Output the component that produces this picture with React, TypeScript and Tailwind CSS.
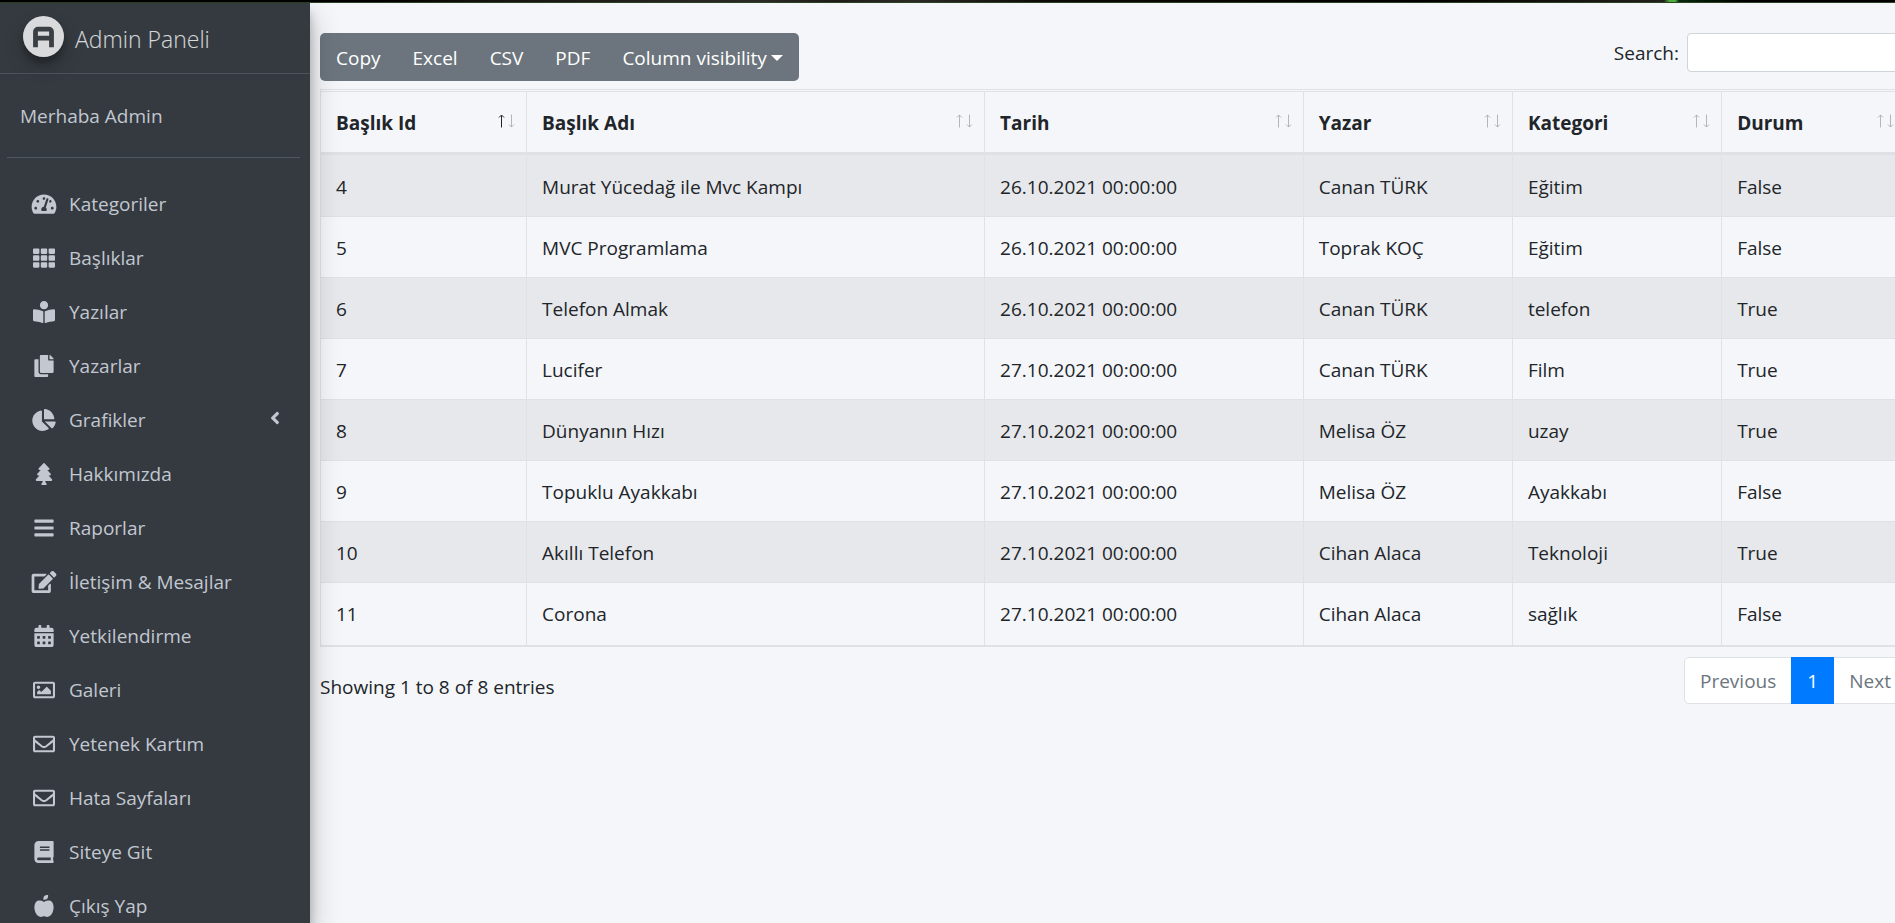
import type { ReactNode } from "react";
import type { IconType } from "react-icons";
import {
  FaAngleLeft,
  FaAppleAlt,
  FaBars,
  FaBook,
  FaBookReader,
  FaCalendarAlt,
  FaChartPie,
  FaCopy,
  FaEdit,
  FaRegEnvelope,
  FaRegImage,
  FaTachometerAlt,
  FaTh,
  FaTree,
} from "react-icons/fa";

type NavEntry = { label: string; icon: IconType; expandable?: boolean };

const navEntries: NavEntry[] = [
  { label: "Kategoriler", icon: FaTachometerAlt },
  { label: "Başlıklar", icon: FaTh },
  { label: "Yazılar", icon: FaBookReader },
  { label: "Yazarlar", icon: FaCopy },
  { label: "Grafikler", icon: FaChartPie, expandable: true },
  { label: "Hakkımızda", icon: FaTree },
  { label: "Raporlar", icon: FaBars },
  { label: "İletişim & Mesajlar", icon: FaEdit },
  { label: "Yetkilendirme", icon: FaCalendarAlt },
  { label: "Galeri", icon: FaRegImage },
  { label: "Yetenek Kartım", icon: FaRegEnvelope },
  { label: "Hata Sayfaları", icon: FaRegEnvelope },
  { label: "Siteye Git", icon: FaBook },
  { label: "Çıkış Yap", icon: FaAppleAlt },
];

const columns = [
  { label: "Başlık Id", width: "w-[13%]" },
  { label: "Başlık Adı", width: "w-[28.9%]" },
  { label: "Tarih", width: "w-[20.1%]" },
  { label: "Yazar", width: "w-[13.2%]" },
  { label: "Kategori", width: "w-[13.2%]" },
  { label: "Durum", width: "w-[11.6%]" },
];

const rows = [
  ["4", "Murat Yücedağ ile Mvc Kampı", "26.10.2021 00:00:00", "Canan TÜRK", "Eğitim", "False"],
  ["5", "MVC Programlama", "26.10.2021 00:00:00", "Toprak KOÇ", "Eğitim", "False"],
  ["6", "Telefon Almak", "26.10.2021 00:00:00", "Canan TÜRK", "telefon", "True"],
  ["7", "Lucifer", "27.10.2021 00:00:00", "Canan TÜRK", "Film", "True"],
  ["8", "Dünyanın Hızı", "27.10.2021 00:00:00", "Melisa ÖZ", "uzay", "True"],
  ["9", "Topuklu Ayakkabı", "27.10.2021 00:00:00", "Melisa ÖZ", "Ayakkabı", "False"],
  ["10", "Akıllı Telefon", "27.10.2021 00:00:00", "Cihan Alaca", "Teknoloji", "True"],
  ["11", "Corona", "27.10.2021 00:00:00", "Cihan Alaca", "sağlık", "False"],
];

function Logo() {
  return (
    <span className="h-[41px] w-[41px] shrink-0 rounded-full shadow-[0_10px_20px_rgba(0,0,0,0.19),0_6px_6px_rgba(0,0,0,0.23)]">
      <svg viewBox="0 0 41 41" className="h-full w-full" aria-hidden="true">
        <circle cx="20.5" cy="20.5" r="20.5" fill="#d9dadb" />
        <path
          d="M12.5 31.3V15.7a2.500 2.500 0 0 1 2.500-2.500h11a2.500 2.500 0 0 1 2.500 2.500v15.600M12.500 22.200h16"
          fill="none"
          stroke="#3a3f44"
          strokeWidth="4.8"
        />
      </svg>
    </span>
  );
}

function SortArrows({ ascending }: { ascending: boolean }) {
  return (
    <svg viewBox="0 0 18 14" className="h-[14px] w-[18px] shrink-0" fill="none" stroke="#212529" aria-hidden="true">
      <path d="M4.500 13.500V1.500M2 3.500L4.500 1L7 3.500" strokeOpacity={ascending ? 1 : 0.3} />
      <path d="M14.500 .5V12.500M12 10.500L14.500 13L17 10.500" strokeOpacity={0.3} />
    </svg>
  );
}

function ToolButton({ children }: { children: ReactNode }) {
  return (
    <button type="button" className="flex h-12 items-center gap-1 px-4 pt-0.5 text-white hover:bg-[#5a6268]">
      {children}
    </button>
  );
}

function Sidebar() {
  return (
    <aside className="z-10 flex w-[310px] shrink-0 flex-col bg-[#343a40] text-[#c2c7d0] shadow-[0_14px_28px_rgba(0,0,0,0.25),0_10px_10px_rgba(0,0,0,0.22)]">
      <a href="#" className="flex h-[71px] shrink-0 items-start gap-[11px] border-b border-[#4b545c] pt-[13px] pl-[23px] text-[23px] font-light text-white/80">
        <Logo />
        <span className="pt-2">Admin Paneli</span>
      </a>
      <div className="mr-[10px] ml-[7px] flex h-[84px] shrink-0 items-center border-b border-[#4f5962] pl-[13px]">
        <a href="#">Merhaba Admin</a>
      </div>
      <nav className="mt-[21px] min-h-0 flex-1 overflow-hidden">
        <ul className="flex flex-col gap-1">
          {navEntries.map(({ label, icon: Icon, expandable }) => (
            <li key={label}>
              <a href="#" className="flex h-[50px] items-center pr-[25px] pl-[30px]">
                <Icon className="h-[22px] w-7 shrink-0" aria-hidden="true" />
                <span className="flex-1 pl-[11px]">{label}</span>
                {expandable && <FaAngleLeft className="mb-1 text-[20px]" aria-hidden="true" />}
              </a>
            </li>
          ))}
        </ul>
      </nav>
    </aside>
  );
}

export default function App() {
  return (
    <div className="flex h-screen flex-col overflow-hidden bg-[#f4f6f9] font-['Open_Sans','Noto_Sans',sans-serif] text-[19px] leading-[30px] text-[#212529]">
      <div className="h-[3px] shrink-0 border-b border-[#2c4020] bg-linear-[90deg,#000_0%,#000_20%,#141412_26%,#2b2b26_40%,#1c1c18_44%,#2b2b26_48%,#0a0a08_55%,#000_75%,#20201c_87.8%,#4caf3c_88.1%,#4caf3c_88.4%,#06280a_88.6%,#000_92%]" />
      <div className="flex min-h-0 flex-1">
        <Sidebar />
        <main className="min-w-0 flex-1 overflow-hidden pt-[30px] pl-[10px]">
          <div className="-mr-3">
            <div className="flex items-start justify-between">
              <div className="flex overflow-hidden rounded-[5px] bg-[#6c757d]">
                <ToolButton>Copy</ToolButton>
                <ToolButton>Excel</ToolButton>
                <ToolButton>CSV</ToolButton>
                <ToolButton>PDF</ToolButton>
                <ToolButton>
                  Column visibility
                  <svg viewBox="0 0 12 6" className="h-[6px] w-3" fill="currentColor" aria-hidden="true">
                    <path d="M0 0H12L6 6Z" />
                  </svg>
                </ToolButton>
              </div>
              <label className="flex items-center gap-2">
                Search:
                <input type="search" className="h-[39px] w-[220px] rounded-[4px] border border-[#ced4da] bg-white px-2" />
              </label>
            </div>
            <table className="mt-2 w-full table-fixed border-separate border-spacing-0 border border-[#dee2e6] pt-px">
              <thead>
                <tr>
                  {columns.map(({ label, width }, index) => (
                    <th
                      key={label}
                      scope="col"
                      aria-sort={index === 0 ? "ascending" : undefined}
                      className={`${width} border-t border-r border-b-[3px] border-[#dee2e6] p-0 text-left font-bold`}
                    >
                      <div className="flex items-start justify-between pt-4 pr-[11px] pb-[14px] pl-[15px]">
                        {label}
                        <span className="flex pt-[6px]">
                          <SortArrows ascending={index === 0} />
                        </span>
                      </div>
                    </th>
                  ))}
                </tr>
              </thead>
              <tbody className="[&>tr:first-child>td]:pt-[17px] [&>tr:last-child>td]:pb-4">
                {rows.map((row) => (
                  <tr key={row[0]} className="odd:bg-[#e7e8eb]">
                    {row.map((cell, index) => (
                      <td key={index} className="border-r border-b border-[#dee2e6] px-[15px] pt-4 pb-[14px]">
                        {cell}
                      </td>
                    ))}
                  </tr>
                ))}
              </tbody>
            </table>
            <div className="flex items-start justify-between pt-[10px]">
              <p className="pt-[15px]">Showing 1 to 8 of 8 entries</p>
              <nav aria-label="Pagination" className="flex h-[47px] rounded-[5px] border border-[#dee2e6] bg-white text-[#6c757d]">
                <a href="#" className="flex items-center px-[15px]">Previous</a>
                <a href="#" aria-current="page" className="-my-px flex w-[43px] items-center justify-center bg-[#007bff] text-white">1</a>
                <a href="#" className="flex items-center px-[15px]">Next</a>
              </nav>
            </div>
          </div>
        </main>
      </div>
    </div>
  );
}
